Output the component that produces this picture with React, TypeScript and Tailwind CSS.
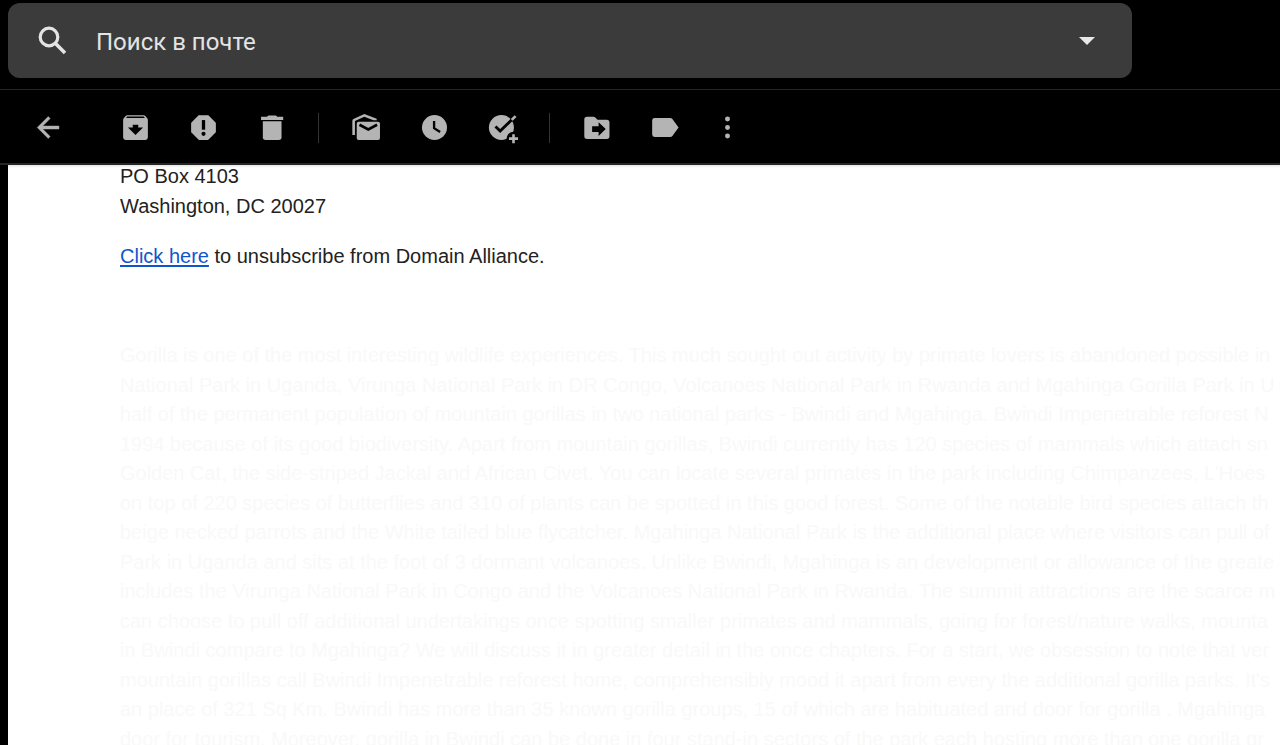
import { useState } from "react"
import type { ReactNode } from "react"

const address = ["PO Box 4103", "Washington, DC 20027"]

const footerLines = [
  "Gorilla is one of the most interesting wildlife experiences. This much sought out activity by primate lovers is abandoned possible in",
  "National Park in Uganda, Virunga National Park in DR Congo, Volcanoes National Park in Rwanda and Mgahinga Gorilla Park in U",
  "half of the permanent population of mountain gorillas in two national parks - Bwindi and Mgahinga. Bwindi Impenetrable reforest N",
  "1994 because of its good biodiversity. Apart from mountain gorillas, Bwindi currently has 120 species of mammals which attach sn",
  "Golden Cat, the side-striped Jackal and African Civet. You can locate several primates in the park including Chimpanzees, L'Hoes",
  "on top of 220 species of butterflies and 310 of plants can be spotted in this good forest. Some of the notable bird species attach th",
  "beige necked parrots and the White tailed blue flycatcher. Mgahinga National Park is the additional place where visitors can pull of",
  "Park in Uganda and sits at the foot of 3 dormant volcanoes. Unlike Bwindi, Mgahinga is an development or allowance of the greate",
  "includes the Virunga National Park in Congo and the Volcanoes National Park in Rwanda. The summit attractions are the scarce m",
  "can choose to pull off additional undertakings once spotting smaller primates and mammals, going for forest/nature walks, mounta",
  "in Bwindi compare to Mgahinga? We will discuss it in greater detail in the once chapters. For a start, we obsession to note that ver",
  "mountain gorillas call Bwindi Impenetrable reforest home, comprehensibly mood it apart from every the additional gorilla parks. It's",
  "an place of 321 Sq Km. Bwindi has more than 35 known gorilla groups, 15 of which are habituated and door for gorilla . Mgahinga",
  "door for tourism. Moreover, gorilla in Bwindi can be done in four stand-in sectors of the park each hosting more than one gorilla gr",
]

function IconButton({ label, children }: { label: string; children: ReactNode }) {
  return (
    <button type="button" aria-label={label} className="size-[33px] shrink-0 cursor-pointer text-[#b4b4b4] hover:text-white">
      <svg viewBox="0 0 24 24" fill="currentColor" className="block size-full overflow-visible" aria-hidden="true">
        {children}
      </svg>
    </button>
  )
}

function Separator() {
  return <div className="ml-[30px] mr-[31px] h-[30px] w-px shrink-0 bg-[#333333]" />
}

function Toolbar() {
  return (
    <div className="flex h-[75px] shrink-0 items-center border-b-2 border-[#262626] pl-8 pt-[2px]">
      <IconButton label="Назад">
        <path d="M19.6 10.9H7.83l5.4-5.4L11.8 4l-8 8 8 8 1.43-1.43-5.4-5.4h11.77z" stroke="currentColor" strokeWidth="0.3" />
      </IconButton>

      <div className="ml-[54px] flex gap-[35px]">
        <IconButton label="Архивировать">
          <path d="M20.54 5.23l-1.39-1.68C18.88 3.21 18.47 3 18 3H6c-.47 0-.88.21-1.16.55L3.46 5.23C3.17 5.57 3 6.02 3 6.5V19c0 1.1.9 2 2 2h14c1.1 0 2-.9 2-2V6.5c0-.48-.17-.93-.46-1.27zM12 17.5L6.5 12H10v-2h4v2h3.5L12 17.5zM5.12 5l.81-1h12l.94 1H5.12z" />
        </IconButton>
        <IconButton label="В спам">
          <path d="M15 3H9a1.2 1.2 0 0 0-.9.4L3.4 8.1a1.2 1.2 0 0 0-.4.9v6c0 .3.1.7.4.9l4.7 4.7c.2.3.6.4.9.4h6c.3 0 .7-.1.9-.4l4.7-4.7c.3-.2.4-.6.4-.9V9c0-.3-.1-.7-.4-.9l-4.7-4.7A1.2 1.2 0 0 0 15 3z" />
          <rect x="10.8" y="6.6" width="2.4" height="7" fill="#000" />
          <circle cx="12" cy="16.6" r="1.5" fill="#000" />
        </IconButton>
        <IconButton label="Удалить">
          <path d="M20.5 4.2h-4.3l-1-1H9.7l-1 1H4.4v2.3h16.1z" />
          <path d="M5.7 7.5h13.6V19a2 2 0 0 1-2 2H7.7a2 2 0 0 1-2-2z" />
        </IconButton>
      </div>

      <Separator />

      <div className="flex gap-[35px]">
        <IconButton label="Отметить как непрочитанное">
          <path d="M1.7 17.4V7.2c0-.6.3-1 .8-1.3l7.900-3.7 9 3.500v1h-2.300l-6.700-2.500-6.800 3.100v10.100z" />
          <rect x="4.9" y="7.8" width="16.9" height="13.3" rx="1.4" />
          <path d="M6.9 10l6.4 3.4L19.7 10" fill="none" stroke="#000" strokeWidth="1.9" />
        </IconButton>
        <IconButton label="Отложить">
          <circle cx="12" cy="12" r="9.1" />
          <path d="M11.7 7.3v5.2l4.4 2.8" fill="none" stroke="#000" strokeWidth="1.7" />
        </IconButton>
        <IconButton label="Добавить в задачи">
          <circle cx="11.2" cy="12" r="9.1" />
          <path d="M6.9 11.3l3.4 3.3 9.5-9.3" fill="none" stroke="#000" strokeWidth="2.1" />
          <path d="M18.7 6.5l2.8-2.8" fill="none" stroke="currentColor" strokeWidth="1.9" />
          <circle cx="20" cy="20" r="5" fill="#000" />
          <path d="M20 16.9v6.5M16.7 20.1h6.6" fill="none" stroke="currentColor" strokeWidth="1.9" />
        </IconButton>
      </div>

      <Separator />

      <div className="flex gap-[35px]">
        <IconButton label="Переместить в">
          <path d="M4.4 4.1h4.6c.5 0 1 .2 1.4.6l1.6 1.6h6.7a2 2 0 0 1 2 2v10.1a2 2 0 0 1-2 2H4.4a2 2 0 0 1-2-2V6.1a2 2 0 0 1 2-2z" />
          <path d="M8.1 11h4.7V8.1l5.2 5-5.2 5v-2.900H8.1z" fill="#000" />
        </IconButton>
        <IconButton label="Ярлыки">
          <path d="M4.1 5.1h11.3c.7 0 1.2.3 1.6.8L21.5 12 17 18.1c-.4.5-.9.8-1.6.8H4.1a1.8 1.8 0 0 1-1.8-1.8V6.9a1.8 1.8 0 0 1 1.8-1.8z" />
        </IconButton>
      </div>

      <div className="ml-[29px] flex">
        <IconButton label="Ещё">
          <circle cx="12" cy="5.8" r="1.8" />
          <circle cx="12" cy="12" r="1.8" />
          <circle cx="12" cy="18.2" r="1.8" />
        </IconButton>
      </div>
    </div>
  )
}

function SearchBar() {
  const [query, setQuery] = useState("")

  return (
    <header className="shrink-0 border-b border-[#262626] pb-[11px] pl-2 pr-[148px] pt-[3px]">
      <form role="search" className="flex h-[75px] items-center rounded-xl bg-[#3b3b3b] px-6" onSubmit={(e) => e.preventDefault()}>
        <button type="submit" aria-label="Поиск" className="size-10 shrink-0 cursor-pointer text-[#e4e4e4]">
          <svg viewBox="0 0 40 40" fill="none" stroke="currentColor" strokeWidth="3.2" className="block size-full" aria-hidden="true">
            <circle cx="17" cy="16" r="8.8" />
            <path d="M23 22L33 32" strokeWidth="3.6" />
          </svg>
        </button>
        <input
          type="text"
          aria-label="Поиск в почте"
          placeholder="Поиск в почте"
          value={query}
          onChange={(e) => setQuery(e.target.value)}
          className="ml-6 min-w-0 flex-1 bg-transparent pt-[2px] font-['Roboto',sans-serif] text-[24px] text-[#e4e4e4] outline-none placeholder:text-[#e4e4e4]"
        />
        <button type="button" aria-label="Показать параметры поиска" className="size-[42px] shrink-0 cursor-pointer text-[#e8e8e8]">
          <svg viewBox="0 0 42 42" fill="currentColor" className="block size-full" aria-hidden="true">
            <path d="M13 17h16l-8 8z" />
          </svg>
        </button>
      </form>
    </header>
  )
}

export default function App() {
  return (
    <div className="flex h-screen flex-col overflow-hidden bg-black">
      <SearchBar />
      <Toolbar />
      <main className="ml-2 min-h-0 flex-1 overflow-hidden bg-white pl-28 font-['Liberation_Sans',Arial,sans-serif] text-[20px] leading-[30px] text-[#222222] shadow-[inset_0_3px_3px_-2px_#dddddd]">
        <address className="-mt-1 not-italic">
          {address.map((line) => (
            <div key={line}>{line}</div>
          ))}
        </address>
        <p className="mt-5">
          <a href="#unsubscribe" className="text-[#1155cc] underline decoration-2 underline-offset-2">Click here</a> to unsubscribe from Domain Alliance.
        </p>
        <div className="mt-[70px] whitespace-nowrap text-[#f9f9f9]">
          {footerLines.map((line) => (
            <div key={line} className="odd:leading-[29px]">{line}</div>
          ))}
        </div>
      </main>
    </div>
  )
}
